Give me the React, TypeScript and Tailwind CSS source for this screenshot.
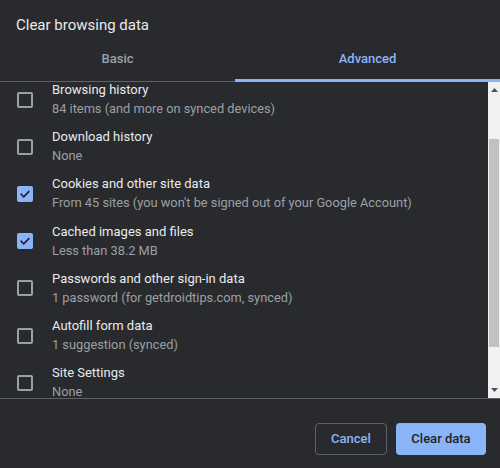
import React from 'react';

interface Item {
  title: string;
  detail: string;
  checked: boolean;
}

const items: Item[] = [
  { title: 'Browsing history', detail: '84 items (and more on synced devices)', checked: false },
  { title: 'Download history', detail: 'None', checked: false },
  { title: 'Cookies and other site data', detail: "From 45 sites (you won't be signed out of your Google Account)", checked: true },
  { title: 'Cached images and files', detail: 'Less than 38.2 MB', checked: true },
  { title: 'Passwords and other sign-in data', detail: '1 password (for getdroidtips.com, synced)', checked: false },
  { title: 'Autofill form data', detail: '1 suggestion (synced)', checked: false },
  { title: 'Site Settings', detail: 'None', checked: false },
];

const Checkbox: React.FC<{ checked: boolean }> = ({ checked }) =>
  checked ? (
    <div className="w-[16px] h-[16px] rounded-[2px] bg-[#8ab4f8] flex items-center justify-center">
      <svg width="12" height="12" viewBox="0 0 24 24" fill="none" stroke="#202124" strokeWidth="3.2" strokeLinecap="square">
        <path d="M4.5 12.5l5 5 10-10" />
      </svg>
    </div>
  ) : (
    <div className="w-[16px] h-[16px] rounded-[2px] border-2 border-[#9aa0a6]" />
  );

export default function App() {
  return (
    <div className="w-[500px] h-[468px] bg-[#292a2d] flex flex-col overflow-hidden" style={{ fontFamily: 'Roboto, "Liberation Sans", sans-serif' }}>
      {/* Header */}
      <div className="pt-[15px] px-4">
        <h1 className="text-[15px] leading-[20px] text-[#e8eaed]">Clear browsing data</h1>
      </div>

      {/* Tabs */}
      <div className="flex h-[47px] border-b border-[#5f6368]">
        <div className="w-[235px] flex items-center justify-center pt-[2px] text-[13px] font-medium text-[#9aa0a6]">Basic</div>
        <div className="relative flex-1 flex items-center justify-center pt-[2px] text-[13px] font-medium text-[#8ab4f8]">
          Advanced
          <span className="absolute left-0 right-0 bottom-[-1px] h-[3px] bg-[#8ab4f8]" />
        </div>
      </div>

      {/* List */}
      <div className="flex h-[317px] border-b border-[#5f6368]">
        <div className="flex-1 overflow-hidden">
          <div className="-mt-[6px]">
            {items.map((item) => (
              <div key={item.title} className="h-[47.2px] flex items-center pl-[17px]">
                <Checkbox checked={item.checked} />
                <div className="ml-[19px] flex flex-col">
                  <span className="text-[13px] leading-[18px] text-[#e8eaed]">{item.title}</span>
                  <span className="text-[12.8px] leading-[19px] text-[#9aa0a6] whitespace-nowrap">{item.detail}</span>
                </div>
              </div>
            ))}
          </div>
        </div>
        {/* Scrollbar */}
        <div className="w-[12px] bg-[#f1f1f1] flex flex-col items-center">
          <div className="h-[16px] flex items-center justify-center">
            <svg width="7" height="4" viewBox="0 0 7 4"><path d="M0 4L3.5 0L7 4Z" fill="#505050" /></svg>
          </div>
          <div className="mt-[41px] w-[10px] h-[208px] bg-[#c1c1c1]" />
          <div className="mt-auto h-[16px] flex items-center justify-center">
            <svg width="7" height="4" viewBox="0 0 7 4"><path d="M0 0L3.5 4L7 0Z" fill="#505050" /></svg>
          </div>
        </div>
      </div>

      {/* Footer */}
      <div className="flex justify-end gap-[9px] pt-[24px] pr-[14px]">
        <button className="w-[72px] h-[32px] rounded-[4px] border border-[#5f6368] text-[13px] font-medium text-[#8ab4f8]">
          Cancel
        </button>
        <button className="w-[90px] h-[32px] rounded-[4px] bg-[#8ab4f8] text-[13px] font-medium text-[#202124]">
          Clear data
        </button>
      </div>
    </div>
  );
}
